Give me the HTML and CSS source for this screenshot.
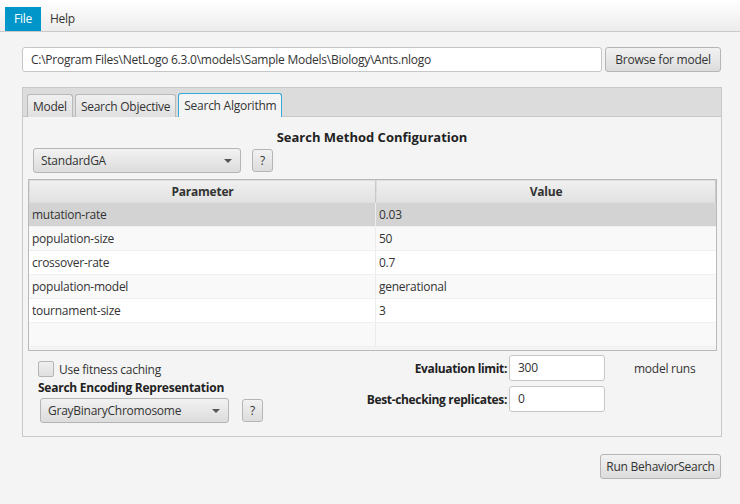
FILE: index.html
```html
<!DOCTYPE html>
<html>
<head>
<meta charset="utf-8">
<link rel="stylesheet" href="styles.css">
</head>
<body>
<div class="menubar">
  <span class="menu active">File</span>
  <span class="menu">Help</span>
</div>
<div class="main">
  <div class="pathrow">
    <div class="field pathfield">C:\Program Files\NetLogo 6.3.0\models\Sample Models\Biology\Ants.nlogo</div>
    <div class="btn browse">Browse for model</div>
  </div>
  <div class="tabpane">
    <div class="tabheader">
      <div class="tab">Model</div>
      <div class="tab">Search Objective</div>
      <div class="tab selected">Search Algorithm</div>
    </div>
    <div class="tabcontent">
      <div class="title">Search Method Configuration</div>
      <div class="comborow">
        <div class="combo combo-method"><span>StandardGA</span><span class="arrow"></span></div>
        <div class="btn qbtn">?</div>
      </div>
      <div class="table">
        <div class="thead">
          <div class="th col1">Parameter</div>
          <div class="th col2">Value</div>
        </div>
        <div class="row sel"><div class="td col1">mutation-rate</div><div class="td col2">0.03</div></div>
        <div class="row alt"><div class="td col1">population-size</div><div class="td col2">50</div></div>
        <div class="row"><div class="td col1">crossover-rate</div><div class="td col2">0.7</div></div>
        <div class="row alt"><div class="td col1">population-model</div><div class="td col2">generational</div></div>
        <div class="row"><div class="td col1">tournament-size</div><div class="td col2">3</div></div>
        <div class="row alt"><div class="td col1"></div><div class="td col2"></div></div>
      </div>
      <div class="bottom">
        <div class="leftcol">
          <label class="check"><span class="box"></span>Use fitness caching</label>
          <div class="subtitle">Search Encoding Representation</div>
          <div class="comborow2">
            <div class="combo combo-enc"><span>GrayBinaryChromosome</span><span class="arrow"></span></div>
            <div class="btn qbtn">?</div>
          </div>
        </div>
        <div class="rightcol">
          <div class="frow">
            <span class="flabel">Evaluation limit:</span>
            <div class="field numfield">300</div>
            <span class="unit">model runs</span>
          </div>
          <div class="frow">
            <span class="flabel">Best-checking replicates:</span>
            <div class="field numfield">0</div>
          </div>
        </div>
      </div>
    </div>
  </div>
  <div class="runrow">
    <div class="btn runbtn">Run BehaviorSearch</div>
  </div>
</div>
</body>
</html>
```

FILE: styles.css
```css
html, body {
  margin: 0;
  padding: 0;
}
body {
  background: #f4f4f4;
  font-family: "Open Sans", "Noto Sans", sans-serif;
  font-size: 12px;
  letter-spacing: -0.25px;
  color: #333333;
  width: 740px;
  height: 504px;
  overflow: hidden;
}
.menubar {
  height: 32px;
  box-sizing: border-box;
  padding: 7px 0 0 5px;
  background: linear-gradient(#ffffff, #ececec);
  border-bottom: 1px solid #c9c9c9;
  display: flex;
}
.menu {
  height: 24px;
  line-height: 24px;
  padding: 0 9px;
  color: #333;
}
.menu.active {
  background: #0096c9;
  color: #ffffff;
}
.main {
  padding: 15px 19px 0 22px;
}
.pathrow {
  display: flex;
  gap: 3px;
  height: 25px;
}
.field {
  background: #ffffff;
  border: 1px solid #c6c6c6;
  border-radius: 3px;
  box-sizing: border-box;
  padding: 0 8px;
  line-height: 23px;
  color: #333;
}
.pathfield {
  width: 581px;
  height: 25px;
}
.btn {
  box-sizing: border-box;
  border: 1px solid #b5b5b5;
  border-radius: 3px;
  background: linear-gradient(#f2f2f2, #dcdcdc);
  text-align: center;
  color: #333;
}
.browse {
  width: 116px;
  height: 25px;
  line-height: 23px;
}
.tabpane {
  margin-top: 15px;
  width: 700px;
  height: 350px;
  box-sizing: border-box;
  border: 1px solid #c8c8c8;
  display: flex;
  flex-direction: column;
}
.tabheader {
  height: 29px;
  box-sizing: border-box;
  background: #dcdcdc;
  border-bottom: 1px solid #c8c8c8;
  padding: 5px 0 0 4px;
  display: flex;
  gap: 2px;
  align-items: flex-end;
}
.tab {
  height: 23px;
  box-sizing: border-box;
  border: 1px solid #b9b9b9;
  border-bottom: none;
  border-radius: 3px 3px 0 0;
  background: linear-gradient(#f0f0f0, #e0e0e0);
  padding: 0 5px;
  line-height: 24px;
  margin-bottom: -1px;
}
.tab.selected {
  background: #f4f4f4;
  border-color: #39a9d9;
  height: 24px;
}
.tabcontent {
  flex: 1;
  padding: 0 5px;
  display: flex;
  flex-direction: column;
}
.title {
  text-align: center;
  font-weight: bold;
  font-size: 13px;
  letter-spacing: 0;
  color: #222;
  margin-top: 11px;
  height: 18px;
  line-height: 18px;
}
.comborow {
  display: flex;
  align-items: center;
  gap: 11px;
  padding-left: 5px;
  margin-top: 2px;
  height: 25px;
}
.combo {
  height: 25px;
  box-sizing: border-box;
  border: 1px solid #b5b5b5;
  border-radius: 3px;
  background: linear-gradient(#f2f2f2, #dcdcdc);
  display: flex;
  align-items: center;
  justify-content: space-between;
  padding: 0 8px 0 7px;
}
.combo-method {
  width: 208px;
}
.combo-enc {
  width: 189px;
}
.arrow {
  width: 0;
  height: 0;
  border-left: 4px solid transparent;
  border-right: 4px solid transparent;
  border-top: 4px solid #555;
}
.qbtn {
  width: 21px;
  height: 23px;
  line-height: 21px;
  font-size: 12px;
}
.table {
  margin-top: 6px;
  box-sizing: border-box;
  width: 689px;
  height: 172px;
  border: 1px solid #b9b9b9;
  background: #f4f4f4;
}
.thead {
  display: flex;
  height: 23px;
  box-sizing: border-box;
  background: linear-gradient(#f0f0f0, #e1e1e1);
}
.th {
  font-weight: bold;
  text-align: center;
  line-height: 21px;
  box-sizing: border-box;
  border: 1px solid #dddddd;
  border-right-color: #c8c8c8;
  color: #333;
}
.col1 {
  width: 347px;
  box-sizing: border-box;
}
.col2 {
  flex: 1;
}
.row {
  display: flex;
  height: 24px;
  background: #ffffff;
  border-bottom: 1px solid #f0f0f0;
  box-sizing: border-box;
}
.row.alt {
  background: #f9f9f9;
}
.row.sel {
  background: #d3d3d3;
}
.td {
  line-height: 23px;
  padding-left: 3px;
  box-sizing: border-box;
}
.td.col1 {
  border-right: 1px solid #ececec;
}
.bottom {
  display: flex;
  margin-top: 4px;
}
.leftcol {
  width: 300px;
  padding-left: 10px;
  padding-top: 6px;
}
.check {
  display: flex;
  align-items: center;
  height: 16px;
  gap: 5px;
}
.box {
  width: 16px;
  height: 16px;
  box-sizing: border-box;
  border: 1px solid #b5b5b5;
  border-radius: 2px;
  background: linear-gradient(#efefef, #dfdfdf);
}
.subtitle {
  font-weight: bold;
  margin-top: 2px;
  height: 18px;
  line-height: 18px;
  color: #222;
  white-space: nowrap;
}
.comborow2 {
  display: flex;
  align-items: center;
  gap: 13px;
  margin-top: 1px;
  padding-left: 2px;
}
.rightcol {
  flex: 1;
  display: flex;
  flex-direction: column;
  gap: 5px;
}
.frow {
  display: flex;
  align-items: center;
  height: 26px;
}
.flabel {
  width: 169px;
  flex: none;
  white-space: nowrap;
  text-align: right;
  font-weight: bold;
  letter-spacing: -0.35px;
  padding-right: 2px;
  color: #222;
}
.numfield {
  width: 96px;
  height: 26px;
  line-height: 24px;
}
.unit {
  margin-left: 29px;
}
.runrow {
  display: flex;
  justify-content: flex-end;
  margin-top: 17px;
}
.runbtn {
  width: 121px;
  height: 25px;
  line-height: 23px;
}
```
